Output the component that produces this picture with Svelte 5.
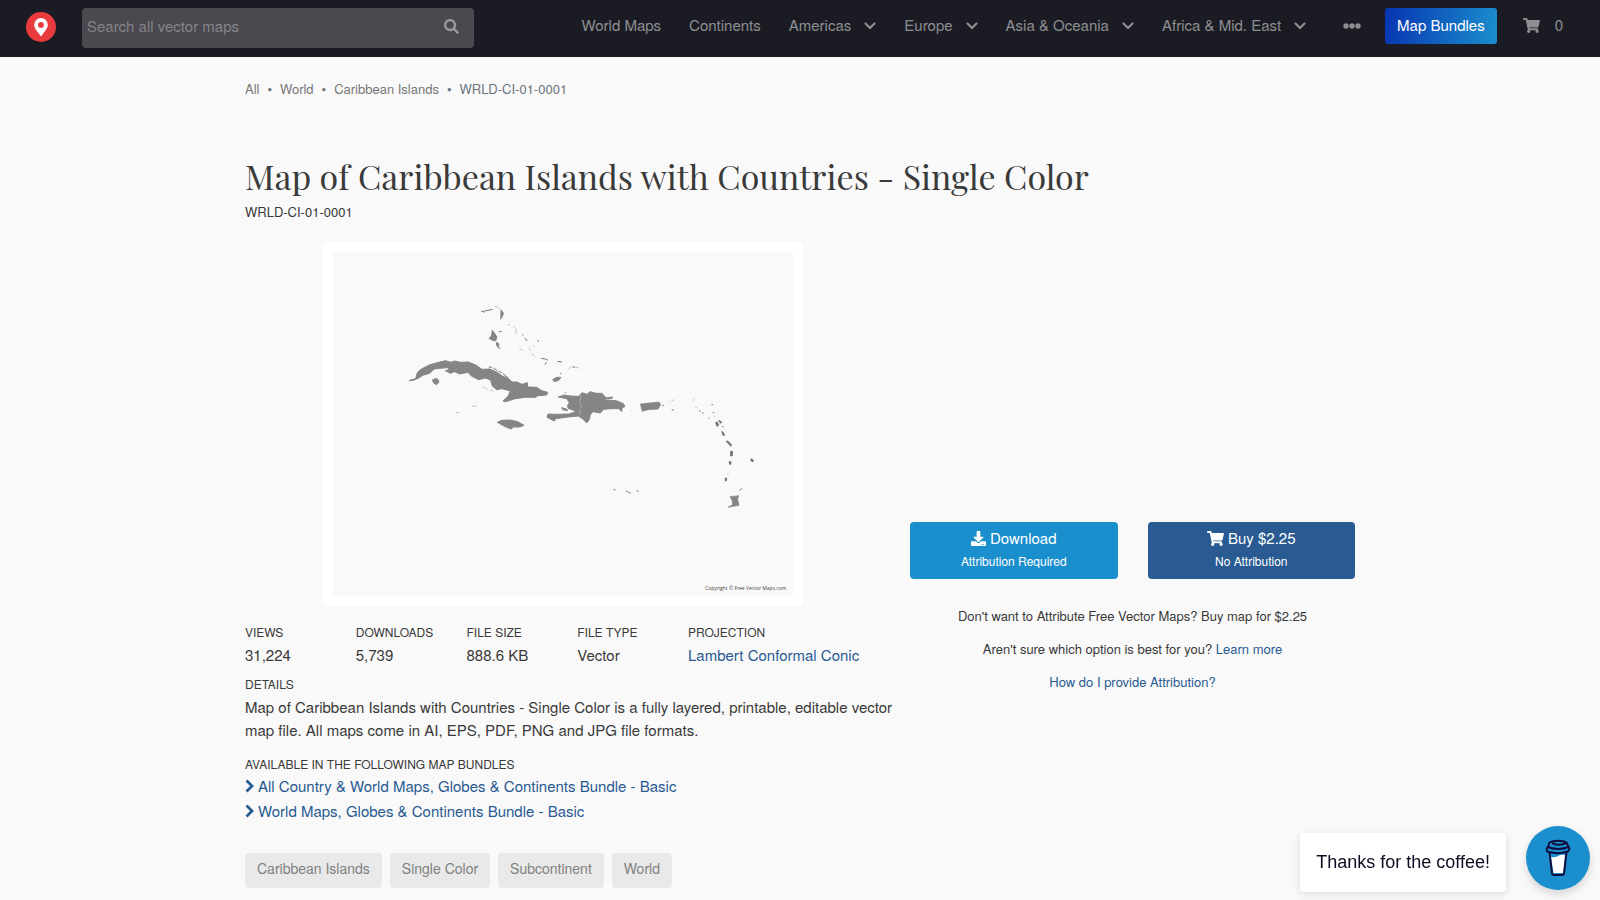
<script>
  const menu = [
    { label: 'World Maps' },
    { label: 'Continents' },
    { label: 'Americas', more: true },
    { label: 'Europe', more: true },
    { label: 'Asia & Oceania', more: true },
    { label: 'Africa & Mid. East', more: true }
  ];
  const crumbs = ['All', 'World', 'Caribbean Islands'];
  const stats = [
    ['Views', '31,224'],
    ['Downloads', '5,739'],
    ['File Size', '888.6 KB'],
    ['File Type', 'Vector']
  ];
  const bundles = [
    'All Country & World Maps, Globes & Continents Bundle - Basic',
    'World Maps, Globes & Continents Bundle - Basic'
  ];
  const tags = ['Caribbean Islands', 'Single Color', 'Subcontinent', 'World'];
  let query = $state('');
</script>

{#snippet cart()}
  <svg class="cart" viewBox="0 0 576 512" aria-hidden="true"><path fill="currentColor" d="M528.1 301.3l47.3-208C578.800 78.300 567.400 64 552 64H159.200l-9.200-44.800C147.800 8 137.900 0 126.500 0H24C10.700 0 0 10.700 0 24v16c0 13.300 10.700 24 24 24h69.900l70.200 343.400C147.300 417.100 136 435.200 136 456c0 30.900 25.100 56 56 56s56-25.100 56-56c0-15.700-6.400-29.800-16.800-40h209.600C430.400 426.200 424 440.300 424 456c0 30.900 25.100 56 56 56s56-25.100 56-56c0-22.200-12.900-41.300-31.600-50.400l5.500-24.300c3.400-15-8-29.300-23.400-29.300H218.100l-6.500-32h293.100c11.200 0 20.900-7.800 23.400-18.700z" /></svg>
{/snippet}

<header>
  <a class="logo" href="#home" aria-label="Free Vector Maps">
    <svg viewBox="0 0 30 30"><circle cx="15" cy="15" r="15" fill="#e83b3d" /><path fill="#fff" fill-rule="evenodd" d="M15 6a6.800 6.800 0 0 0-6.800 6.800c0 2.400 1.200 4.200 2.800 6.500L15 24.500l4-5.200c1.600-2.300 2.800-4.100 2.800-6.500A6.800 6.800 0 0 0 15 6zm0 4a2.900 2.900 0 1 1 0 5.800A2.900 2.900 0 0 1 15 10z" /></svg>
  </a>
  <form class="search" onsubmit={(e) => e.preventDefault()}>
    <input type="text" aria-label="Search all vector maps" placeholder="Search all vector maps" bind:value={query} />
    <button aria-label="Search">
      <svg viewBox="0 0 512 512"><path fill="currentColor" d="M505 442.700L405.300 343c-4.500-4.500-10.600-7-17-7H372c27.600-35.300 44-79.700 44-128C416 93.100 322.900 0 208 0S0 93.100 0 208s93.100 208 208 208c48.300 0 92.700-16.400 128-44v16.300c0 6.400 2.500 12.500 7 17l99.700 99.700c9.400 9.400 24.600 9.400 33.900 0l28.300-28.300c9.400-9.400 9.400-24.600.1-34zM208 336c-70.700 0-128-57.200-128-128 0-70.700 57.200-128 128-128 70.700 0 128 57.200 128 128 0 70.700-57.200 128-128 128z" /></svg>
    </button>
  </form>
  <nav>
    {#each menu as item}
      <a href="#menu">{item.label}{#if item.more}<svg class="down" viewBox="0 0 12 8"><path d="M1.500 1.500 6 6l4.500-4.500" fill="none" stroke="currentColor" stroke-width="2.200" stroke-linecap="round" stroke-linejoin="round" /></svg>{/if}</a>
    {/each}
    <button class="dots" aria-label="More"><svg viewBox="0 0 18 6"><g fill="currentColor"><circle cx="3" cy="3" r="2.700" /><circle cx="9" cy="3" r="2.700" /><circle cx="15" cy="3" r="2.700" /></g></svg></button>
    <a class="bundle-button" href="#bundles">Map Bundles</a>
    <a class="basket" href="#cart" aria-label="Cart, 0 items">{@render cart()}<span>0</span></a>
  </nav>
</header>

<main>
  <ol class="crumbs">
    {#each crumbs as crumb}<li><a href="#crumb">{crumb}</a></li>{/each}
    <li>WRLD-CI-01-0001</li>
  </ol>
  <h1>Map of Caribbean Islands with Countries - Single Color</h1>
  <p class="code">WRLD-CI-01-0001</p>

  <div class="columns">
    <section class="product">
      <div class="frame">
        <svg class="map" viewBox="0 0 1380 1032" role="img" aria-label="Map of Caribbean Islands">
          <g transform="translate(201 114)" fill="#858585" stroke="#858585" stroke-width="3">
            <path d="M27 272 46 266 49 261C47 252 58 239 70 234L90 224 116 217 137 212 153 217 164 213 181 217 205 216 229 226 246 238 270 237 291 247 307 258 326 266 336 276 351 276 366 283 382 278 383 291 410 292 425 302 443 307 440 315 414 317 406 322 374 322 346 326 317 335 309 333 324 319 331 303 306 296 290 299 277 288 272 271 257 264 236 269 215 259 204 247 179 252 164 245 151 250 136 242 148 239 143 233 119 235 103 237 89 250 68 256 58 263 43 270Z" />
            <path d="M97 271 101 267 112 266 117 276 110 284 101 279Z" />
            <path d="M292 397 306 391 332 390 353 395 372 406 360 411 340 411 334 417 320 412 308 406Z" />
            <path d="M475 321 493 315 511 318 536 319 546 308 561 313 570 305 588 310 606 310 619 325 616 330 648 332 669 340 675 349 666 354 665 365 657 356 633 356 611 358 601 369 579 365 570 375 569 387 560 399 549 387 535 378 504 381 467 386 463 393 441 382 444 372 468 373 508 372 526 365 521 361 504 355 503 345 508 338 500 326Z" />
            <path d="M485 353 499 357 504 362 488 359ZM620 323 638 321 636 325 621 327ZM458 269 470 262 483 262 476 271 463 275Z" />
            <path d="M277 121 284 130 291 141 287 153 277 151 267 145 274 138ZM289 157 298 162 294 168 300 177 290 168ZM303 60 311 70 305 84 302 76Z" stroke="#777" stroke-width="2" />
            <path d="M541 316 542 330 539 342 545 350 538 363 541 375" fill="none" stroke="#b7b7b7" stroke-dasharray="6 3" />
            <g fill="none" stroke="#777">
              <path d="M244 63 253 67M250 64 278 58M302 81V88M266 231 276 232M280 234 292 242M295 243 306 249M309 251 325 264M297 125H305M366 133 370 136M374 144 382 153M424 205 436 207 444 211M440 216 434 224M472 214 486 216M517 231H525M412 153H417M480 250H484" />
              <path d="M283 49 293 51 301 59M323 103 330 105M341 110 348 117 348 132M358 176 370 181M386 174 392 182M394 190 406 200M400 170H404M505 236 512 231M526 232 538 234M168 369 178 367M216 349 230 348M492 308H501M248 290 263 298M270 300 280 304" stroke-width="2" stroke="#aaa" />
            </g>
          </g>
          <g transform="translate(621 354)" fill="#777">
            <path d="M301 102 320 100 357 96 362 104 355 117 325 119 307 124 304 114ZM570 380 596 377 593 388 597 406 564 412 578 404 576 390Z" fill="#858585" stroke="#858585" stroke-width="2" />
            <path d="M527 157 533 157 536 166 530 169ZM536 151 546 156 541 160ZM545 184 551 188 554 197 548 195ZM558 213 565 214 575 224 572 229ZM572 244 578 244 577 258 571 257ZM567 275H573V283H569ZM556 324 561 325 559 333 555 332ZM631 267 637 267 641 273 636 276Z" stroke="#666" stroke-width="2" />
            <g fill="none" stroke="#888" stroke-width="3">
              <path d="M514 104H519M518 127H523M546 170H551M477 121 482 125M486 128 491 130M598 361 607 355M258 362 264 366 273 370M289 361 296 365M367 107H372M395 120H402M220 358 227 360M505 144H509" />
              <path d="M385 96 391 94M395 93 404 88M461 86V94M466 110 473 115M273 122H278M564 309V315M523 137V142" stroke="#bbb" stroke-width="2" />
            </g>
          </g>
          <text x="1360" y="1013" text-anchor="end">Copyright © Free Vector Maps.com</text>
        </svg>
      </div>

      <dl class="stats">
        {#each stats as [label, value]}
          <div><dt>{label}</dt><dd>{value}</dd></div>
        {/each}
        <div><dt>Projection</dt><dd><a href="#projection">Lambert Conformal Conic</a></dd></div>
      </dl>
      <h2>Details</h2>
      <p class="details">Map of Caribbean Islands with Countries - Single Color is a fully layered, printable, editable vector map file. All maps come in AI, EPS, PDF, PNG and JPG file formats.</p>
      <h2>Available in the following map bundles</h2>
      <ul class="bundles">
        {#each bundles as bundle}
          <li><a href="#bundle"><svg viewBox="0 0 9 14"><path d="M1.500 1.500 7 7l-5.500 5.500" fill="none" stroke="currentColor" stroke-width="2.800" /></svg>{bundle}</a></li>
        {/each}
      </ul>
      <div class="tags">
        {#each tags as tag}<a href="#tag">{tag}</a>{/each}
      </div>
    </section>

    <aside>
      <div class="slot"></div>
      <div class="actions">
        <button class="download">
          <span class="main-line"><svg viewBox="0 0 512 512"><path fill="currentColor" d="M216 0h80c13.300 0 24 10.700 24 24v168h87.700c17.800 0 26.700 21.500 14.100 34.100L269.700 378.300c-7.500 7.500-19.800 7.500-27.300 0L90.100 226.100c-12.600-12.600-3.700-34.100 14.100-34.100H192V24c0-13.300 10.700-24 24-24zm296 376v112c0 13.300-10.700 24-24 24H24c-13.300 0-24-10.700-24-24V376c0-13.300 10.700-24 24-24h146.700l49 49c20.100 20.100 52.500 20.100 72.600 0l49-49H488c13.300 0 24 10.700 24 24zm-124 88a20 20 0 1 0-40 0 20 20 0 0 0 40 0zm64 0a20 20 0 1 0-40 0 20 20 0 0 0 40 0z" /></svg>Download</span>
          <span class="sub-line">Attribution Required</span>
        </button>
        <button class="buy">
          <span class="main-line">{@render cart()}Buy $2.25</span>
          <span class="sub-line">No Attribution</span>
        </button>
      </div>
      <p>Don't want to Attribute Free Vector Maps? Buy map for $2.25</p>
      <p>Aren't sure which option is best for you? <a href="#learn">Learn more</a></p>
      <p><a href="#attribution">How do I provide Attribution?</a></p>
    </aside>
  </div>
</main>

<div class="coffee">
  <div class="message">Thanks for the coffee!</div>
  <button aria-label="Buy a coffee">
    <svg viewBox="0 0 26 38" fill="none" stroke="#0d0c3c" stroke-width="2" stroke-linecap="round" stroke-linejoin="round">
      <path d="M6 18Q10 19 13 17T20 16L18.500 34H8.500Z" fill="#fff" stroke="none" />
      <path d="M4.500 13.500 7 34.500Q7.200 36 9 36H17Q18.800 36 19 34.500L21.500 13.500" />
      <path d="M2.500 8.500C1 10 1.500 12.500 3.500 13 10 14.500 17 14.500 22.500 12.500 24.500 11.700 25 9 23.500 8" />
      <path d="M3 8C8 10.500 18 10.500 23.500 8L21.500 3.500C18 1 8.500 1 4.500 3.500L3 8M8 4.500C11 6 16 6 20 4.500" />
    </svg>
  </button>
</div>

<style>
  :global(body) {
    margin: 0;
    background: #f9f9f9;
    color: #3a3a3a;
    font: 15px/23px "Nimbus Sans", "TeX Gyre Heros", "Helvetica Neue", Helvetica, "Liberation Sans", Arial, sans-serif;
  }
  a { color: #295b92; text-decoration: none; }
  button { border: 0; font: inherit; cursor: pointer; }
  svg { display: block; flex: none; }
  p, h1, h2, dl, dd, ul, ol { margin: 0; padding: 0; }
  ul, ol { list-style: none; }

  header {
    display: flex;
    align-items: flex-start;
    box-sizing: border-box;
    height: 57px;
    padding: 8px 37px 0 26px;
    background: #1b1c23;
  }
  .logo { padding-top: 4px; }
  .logo svg { width: 30px; height: 30px; }
  .search {
    display: flex;
    align-items: center;
    width: 392px;
    height: 40px;
    margin-left: 26px;
    background: #4a494f;
    border-radius: 4px;
  }
  .search input {
    flex: 1;
    min-width: 0;
    padding: 0 5px 5px;
    border: 0;
    outline: 0;
    background: none;
    color: #fff;
    font: inherit;
  }
  .search input::placeholder { color: #858489; opacity: 1; }
  .search button { padding: 0 15px 4px; background: none; color: #99989d; }
  .search svg { width: 15px; height: 15px; }
  nav { display: flex; align-items: center; height: 36px; margin-left: auto; color: #8d8e92; white-space: nowrap; }
  nav a { display: flex; align-items: center; margin-right: 28px; padding-bottom: 4px; color: inherit; }
  .down { width: 12px; height: 8px; margin: 4px 0 0 13px; }
  .dots { margin: 0 24px 0 9px; padding: 0; background: none; color: inherit; }
  .dots svg { width: 18px; height: 6px; }
  .bundle-button {
    box-sizing: border-box;
    height: 36px;
    margin-right: 26px;
    padding: 0 12px 4px;
    border-radius: 3px;
    background: linear-gradient(100deg, #0734b1, #1b8fcd);
    color: #fff;
  }
  .basket { gap: 15px; margin-right: 0; }
  .cart { width: 17px; height: 15px; }
  .basket .cart { margin-top: 2px; }

  main { box-sizing: border-box; max-width: 1140px; margin: 0 auto; padding: 20px 15px 12px; }
  .crumbs { display: flex; font-size: 13px; color: #6c757d; }
  .crumbs a { color: #777; }
  .crumbs li + li::before { content: "•"; padding: 0 8px; }
  h1 {
    margin-top: 51px;
    font: 400 34px/50px "Playfair Display", "Liberation Serif", serif;
  }
  .code { margin-top: 1px; font-size: 13px; line-height: 20px; }
  .columns { display: grid; grid-template-columns: 635fr 445fr; gap: 30px; margin-top: 20px; }
  .frame { box-sizing: border-box; max-width: 480px; margin: 0 auto 14px; padding: 10px; background: #fff; border-radius: 3px; }
  .map { width: 100%; background: #f9f9f9; }
  .map text { font: 15px "Open Sans", sans-serif; fill: #444; }
  .stats { display: grid; grid-template-columns: 1fr 1fr 1fr 1fr 192px; }
  dt, h2 { font-size: 12px; font-weight: 400; line-height: 23px; text-transform: uppercase; }
  h2 { margin-top: 6px; }
  .details { margin-right: -20px; }
  .details + h2 { margin-top: 14px; line-height: 18px; }
  .bundles li { line-height: 25px; }
  .bundles a { display: flex; align-items: center; gap: 4px; }
  .bundles svg { width: 9px; height: 14px; }
  .tags { display: flex; gap: 8px; margin-top: 30px; font-size: 14px; }
  .tags a { padding: 4px 12px 8px; background: #e9e9e9; border-radius: 4px; color: #808080; }

  aside { font-size: 13px; text-align: center; }
  .slot { height: 280px; }
  .actions { display: grid; grid-template-columns: 1fr 1fr; gap: 30px; margin-bottom: 25px; }
  .actions button { padding: 5px 0 7px; border-radius: 4px; color: #fff; }
  .download { background: #1b8fcd; }
  .buy { background: #295b92; }
  .main-line { display: flex; align-items: center; justify-content: center; gap: 4px; font-size: 15px; line-height: 22px; }
  .main-line svg { width: 15px; height: 15px; }
  .main-line .cart { width: 17px; }
  .sub-line { display: block; font-size: 12px; }
  aside p { margin-bottom: 10px; }

  .coffee { position: fixed; right: 10px; bottom: 8px; display: flex; align-items: flex-end; gap: 20px; }
  .message {
    padding: 18px 16px;
    background: #fff;
    border-radius: 4px;
    box-shadow: 0 2px 8px rgba(0, 0, 0, 0.12);
    color: #0d0c22;
    font-family: "Liberation Sans", Arial, sans-serif;
    font-size: 18px;
  }
  .coffee button {
    display: grid;
    place-items: center;
    width: 64px;
    height: 64px;
    margin-bottom: 2px;
    padding: 0;
    border-radius: 50%;
    background: #1b8fcd;
    box-shadow: 0 4px 8px rgba(0, 0, 0, 0.15);
  }
  .coffee svg { width: 26px; height: 38px; }
</style>
